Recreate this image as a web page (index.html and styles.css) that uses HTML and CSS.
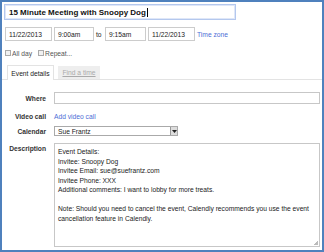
FILE: index.html
```
<!DOCTYPE html>
<html>
<head>
<meta charset="utf-8">
<link rel="stylesheet" href="styles.css">
</head>
<body>
<div class="frame">
  <div class="title-row">
    <div class="title-input">15 Minute Meeting with Snoopy Dog<span class="caret"></span></div>
  </div>
  <div class="date-row">
    <div class="field w47">11/22/2013</div>
    <div class="field w40">9:00am</div>
    <span class="to">to</span>
    <div class="field w41">9:15am</div>
    <div class="field w47">11/22/2013</div>
    <a class="link tz">Time zone</a>
  </div>
  <div class="check-row">
    <label class="check"><span class="box"></span>All day</label>
    <label class="check"><span class="box"></span>Repeat...</label>
  </div>
  <div class="tabs">
    <div class="tab active">Event details</div>
    <div class="tab inactive">Find a time</div>
  </div>
  <div class="form">
    <div class="row where">
      <div class="label">Where</div>
      <div class="input wide"></div>
    </div>
    <div class="row video">
      <div class="label">Video call</div>
      <a class="link">Add video call</a>
    </div>
    <div class="row cal">
      <div class="label">Calendar</div>
      <div class="select">Sue Frantz<span class="arrow"><svg width="5" height="3" viewBox="0 0 5 3"><path d="M0 0H5L2.5 3Z" fill="#222"/></svg></span></div>
    </div>
    <div class="row desc">
      <div class="label">Description</div>
      <div class="textarea">
        <p>Event Details:<br>Invitee: Snoopy Dog<br>Invitee Email: sue@suefrantz.com<br>Invitee Phone: XXX<br>Additional comments: I want to lobby for more treats.</p>
        <p>Note: Should you need to cancel the event, Calendly recommends you use the event cancellation feature in Calendly.</p>
        <span class="grip"></span>
      </div>
    </div>
  </div>
</div>
</body>
</html>
```
FILE: styles.css
```
html, body {
  margin: 0;
  padding: 0;
  background: #fff;
}
.frame {
  width: 324px;
  height: 252px;
  box-sizing: border-box;
  border: 2px solid #4f81bd;
  font-family: "Liberation Sans", Arial, sans-serif;
  font-size: 6.7px;
  color: #222;
  padding: 2px 2px 0 3px;
  display: flex;
  flex-direction: column;
}
.title-row {
  display: flex;
}
.title-input {
  width: 232px;
  height: 16px;
  box-sizing: border-box;
  border: 1px solid #b4c8ee;
  box-shadow: inset 0 0 0 1px #dfe7f8;
  font-size: 8px;
  font-weight: bold;
  color: #111;
  display: flex;
  align-items: center;
  padding-left: 4px;
  margin-left: -1px;
}
.caret {
  display: inline-block;
  width: 1px;
  height: 9px;
  background: #000;
  margin-left: 1px;
}
.date-row {
  display: flex;
  align-items: center;
  margin-top: 7px;
  height: 14px;
}
.field {
  height: 14px;
  box-sizing: border-box;
  border: 1px solid #ccc;
  display: flex;
  align-items: center;
  padding-left: 3px;
  margin-right: 2px;
}
.w47 { width: 47px; }
.w40 { width: 40px; }
.w41 { width: 41px; }
.to {
  margin: 0 2px 0 0;
  width: 7px;
}
.link {
  color: #4d6ed6;
}
.check-row {
  display: flex;
  align-items: center;
  margin-top: 8px;
  height: 8px;
  color: #555;
}
.check {
  display: flex;
  align-items: center;
  margin-right: 6px;
}
.box {
  width: 6px;
  height: 6px;
  box-sizing: border-box;
  border: 1px solid #aaa;
  background: #f1f1f1;
  margin-right: 1px;
}
.tabs {
  display: flex;
  align-items: flex-end;
  margin-top: 7px;
  margin-left: -3px;
  margin-right: -2px;
  padding-left: 5px;
  border-bottom: 1px solid #e3e3e3;
  height: 15px;
}
.tab {
  height: 14px;
  box-sizing: border-box;
  display: flex;
  align-items: center;
  justify-content: center;
}
.active {
  width: 47px;
  border: 1px solid #e3e3e3;
  border-bottom: none;
  background: #fff;
  height: 15px;
  margin-bottom: -1px;
  color: #222;
}
.inactive {
  width: 42px;
  margin-left: 4px;
  background: #eee;
  color: #aaa;
  text-decoration: underline;
  height: 13px;
}
.form {
  display: flex;
  flex-direction: column;
  margin-top: 12px;
}
.row {
  display: flex;
}
.label {
  width: 41px;
  text-align: right;
  font-weight: bold;
  color: #333;
  margin-right: 8px;
  flex-shrink: 0;
}
.where {
  align-items: center;
  height: 12px;
}
.input.wide {
  width: 267px;
  height: 12px;
  box-sizing: border-box;
  border: 1px solid #c7c7c7;
}
.video {
  align-items: center;
  margin-top: 6px;
  height: 12px;
}
.cal {
  align-items: center;
  margin-top: 4px;
  height: 10px;
}
.select {
  width: 124px;
  height: 10px;
  box-sizing: border-box;
  border: 1px solid #aaa;
  display: flex;
  align-items: center;
  padding-left: 3px;
  position: relative;
}
.arrow {
  position: absolute;
  right: 0;
  top: 0;
  width: 7px;
  height: 8px;
  box-sizing: border-box;
  border-left: 1px solid #999;
  background: #ddd;
  display: flex;
  align-items: center;
  justify-content: center;
}
.desc {
  margin-top: 7px;
}
.desc .label {
  padding-top: 2px;
}
.textarea {
  width: 267px;
  height: 104px;
  box-sizing: border-box;
  border: 1px solid #c7c7c7;
  padding: 3px 3px;
  line-height: 9.5px;
  position: relative;
}
.textarea p {
  margin: 0 0 9.5px 0;
}
.grip {
  position: absolute;
  right: 1px;
  bottom: 1px;
  width: 4px;
  height: 4px;
  background: linear-gradient(135deg, transparent 50%, #bbb 50%);
}
```
